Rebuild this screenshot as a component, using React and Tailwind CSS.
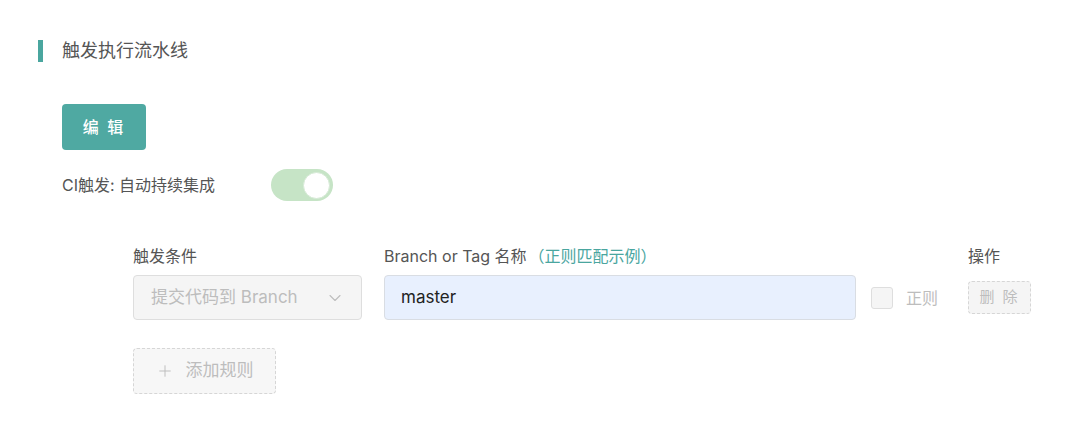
import { ChevronDown, Plus } from "lucide-react"

const font = { fontFamily: '"Inter", "Noto Sans CJK SC", sans-serif' }

export default function App() {
  return (
    <div className="w-[1080px] h-[429px] bg-white text-[#555] pt-[40px] pl-[38px]" style={font}>
      {/* Section title */}
      <div className="flex items-center gap-[19px] h-[22px]">
        <div className="w-[5px] h-[22px] bg-[#4aa69f]" />
        <h2 className="text-[18px] leading-none text-[#555]">触发执行流水线</h2>
      </div>

      <div className="pl-[24px] mt-[42px]">
        <button className="w-[84px] h-[46px] rounded-[4px] bg-[#4fa9a2] text-white text-[16px] font-medium tracking-[2px]">
          编 辑
        </button>

        <div className="flex items-center mt-[19px] h-[32px]">
          <span className="text-[16px] text-[#555] w-[209px]">CI触发: 自动持续集成</span>
          <div className="w-[62px] h-[32px] rounded-full bg-[#c6e4c6] flex items-center justify-end pr-[3px]">
            <div className="w-[27px] h-[27px] rounded-full bg-white border border-[#d6ead6]" />
          </div>
        </div>
      </div>

      {/* Rule table */}
      <div className="pl-[95px] mt-[45px]">
        <div className="flex items-center h-[20px] text-[16px] text-[#555]">
          <span className="w-[251px]">触发条件</span>
          <span className="w-[584px]">
            Branch or Tag 名称<span className="text-[#4aa69f] ml-[2px]">（正则匹配示例）</span>
          </span>
          <span>操作</span>
        </div>

        <div className="flex items-center mt-[9px] h-[45px]">
          <div className="w-[229px] h-[45px] rounded-[4px] border border-[#dedede] bg-[#f5f5f5] flex items-center justify-between pl-[17px] pr-[16px] text-[17px] text-[#bdbdbd]">
            <span>提交代码到 Branch</span>
            <ChevronDown size={20} strokeWidth={1.3} className="text-[#bdbdbd]" />
          </div>
          <div className="ml-[22px] w-[472px] h-[45px] rounded-[4px] border border-[#d9dde3] bg-[#e8f0fe] flex items-center pl-[16px] text-[17px] text-[#222]">
            master
          </div>
          <div className="ml-[15px] w-[97px] flex items-center">
            <div className="w-[22px] h-[22px] rounded-[3px] border border-[#dedede] bg-[#f5f5f5]" />
            <span className="ml-[13px] text-[16px] text-[#bdbdbd]">正则</span>
          </div>
          <button className="w-[63px] h-[33px] rounded-[4px] border border-dashed border-[#d6d6d6] bg-[#f5f5f5] text-[15px] text-[#bdbdbd] tracking-[2px]">
            删 除
          </button>
        </div>

        <button className="mt-[28px] w-[143px] h-[46px] rounded-[4px] border border-dashed border-[#d6d6d6] bg-[#f7f7f7] flex items-center justify-center gap-[12px] text-[17px] text-[#bdbdbd]">
          <Plus size={18} strokeWidth={1.3} />
          <span>添加规则</span>
        </button>
      </div>
    </div>
  )
}
